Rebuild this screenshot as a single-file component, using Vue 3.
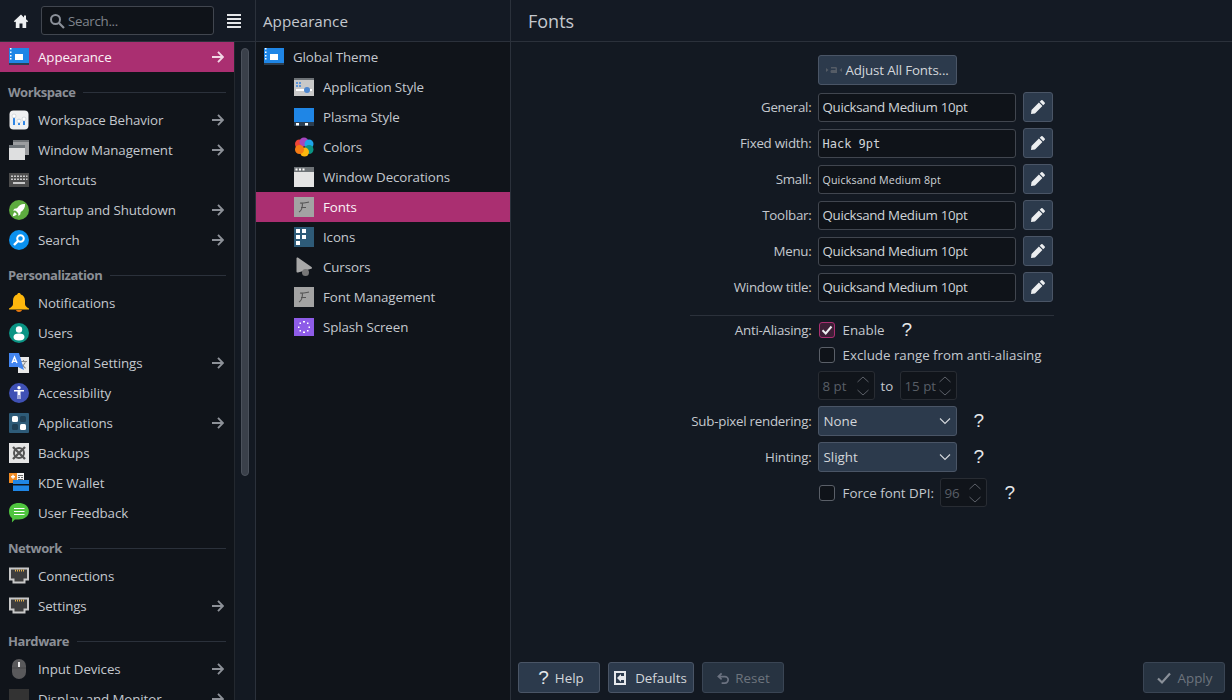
<script setup>
const icons = {
  appearance: '<rect y="1" width="20" height="17" fill="#1f86e6"/><rect y="16" width="20" height="2" fill="#2c3e50"/><path fill="#fff" d="M1 1h1.500v1.500H1zM1 4.500h1.500V6H1zM1 8h1.500v1.500H1zM1 11h1.500v1.500H1zM6 7h8v6H6z"/>',
  workspace: '<rect x=".5" y=".5" width="19" height="19" rx="4" fill="#eff0f1"/><path fill="#2f86e6" d="M4 6h2v9H4zM9 9h2v6H9zM14 11h2v4h-2z"/><circle cx="5" cy="6" r="2" fill="#fff" stroke="#b5bcc2" stroke-width=".5"/><circle cx="10" cy="11" r="2" fill="#fff" stroke="#b5bcc2" stroke-width=".5"/><circle cx="15" cy="9" r="2" fill="#fff" stroke="#b5bcc2" stroke-width=".5"/>',
  windows: '<rect x="4" width="16" height="15" fill="#9b9da0"/><rect x="4" width="16" height="2" fill="#6f7377"/><rect y="5" width="16" height="15" fill="#dedfe0"/><rect y="5" width="16" height="3" fill="#70767b"/>',
  keyboard: '<rect y="3" width="20" height="14" fill="#4d4d4d"/><path fill="#c9c9c9" d="M2 5.500h2v1.500H2zM5 5.500h2v1.500H5zM8 5.500h2v1.500H8zM11 5.500h2v1.500h-2zM14 5.500h2v1.500h-2zM17 5.500h1.500v1.500H17zM2 8.500h2v1.500H2zM5 8.500h2v1.500H5zM8 8.500h2v1.500H8zM11 8.500h2v1.500h-2zM14 8.500h2v1.500h-2zM17 8.500h1.500v1.500H17zM4 12h12v2H4z"/>',
  rocket: '<circle cx="10" cy="10" r="10" fill="#5dab3f"/><path fill="#fff" d="M16 4c-3.500-.3-6 1.200-8 4.300L5.500 8.800 4 10.500l2.800.3 2.400 2.400.3 2.800 1.700-1.500.5-2.500C14.800 10 16.300 7.500 16 4zM5.800 12.200C4.800 12.800 4 14.400 3.800 16.200c1.800-.2 3.400-1 4-2z"/>',
  search: '<circle cx="10" cy="10" r="10" fill="#0a91ef"/><circle cx="11.500" cy="8.500" r="3.300" fill="none" stroke="#fff" stroke-width="2"/><path d="M9 11l-4 4" stroke="#fff" stroke-width="2.400"/>',
  bell: '<path fill="#fdb70d" d="M10 0c1 0 1.700.7 1.800 1.600 2.700.8 4.200 3 4.200 6.400v3c0 1.600 1.300 3 4 4.500v1H0v-1c2.700-1.500 4-2.900 4-4.500V8c0-3.400 1.500-5.600 4.200-6.400C8.300.7 9 0 10 0z"/><path fill="#e8780e" d="M7 17h6c-.3 1.300-1.500 2-3 2s-2.700-.7-3-2z"/>',
  users: '<circle cx="10" cy="10" r="10" fill="#0b9484"/><circle cx="10" cy="6.500" r="3.200" fill="#fff"/><path fill="#fff" d="M4.500 14c0-2.400 2-3.500 5.500-3.500s5.500 1.100 5.500 3.500-2.200 3.500-5.500 3.500-5.500-1.100-5.500-3.500z"/>',
  regional: '<rect x="9" y="4" width="11" height="16" fill="#e9e9e9"/><path fill="#888" d="M11 8h7v1h-7zM14 7h1v2h-1zM12 15l4-6 .8.5-4 6zM13 11l4 4-.8.7-4-4z"/><path fill="#4285f0" d="M0 0h10l5 17-6-3H0z"/><path fill="none" stroke="#fff" stroke-width="1.400" d="M3 10l2.500-6L8 10M3.900 8.200h3.200"/>',
  access: '<circle cx="10" cy="10" r="10" fill="#3f51b5"/><circle cx="10" cy="4.800" r="1.700" fill="#fff"/><path fill="#fff" d="M5 7h10v1.500h-3.500V16h-1v-4h-1v4h-1V8.500H5z"/>',
  apps: '<rect width="20" height="20" rx="1" fill="#2e5b78"/><rect x="3" y="3" width="6" height="6" rx="1.500" fill="#fff"/><rect x="11" y="3" width="6" height="6" rx="1.500" fill="#1f3f55"/><rect x="3" y="11" width="6" height="6" rx="1.500" fill="#1f3f55"/><rect x="11" y="11" width="6" height="6" rx="1.500" fill="#fff"/>',
  backups: '<rect width="20" height="20" fill="#e6e6e6"/><circle cx="10" cy="10" r="5" fill="none" stroke="#555" stroke-width="2"/><path stroke="#555" stroke-width="2.400" d="M4 4l12 12M16 4L4 16"/>',
  wallet: '<rect y="0" width="15" height="10" fill="#f4f4f4"/><rect y="0" width="8" height="10" fill="#f08b24"/><path fill="#fff" d="M2 3h4v1.500H2zM3.300 1.800h1.400v4H3.300z"/><path fill="#666" d="M9 2h5v1H9zM9 4h2v1H9zM12 4h2v1h-2zM9 6h5v1H9z"/><rect x="4" y="7" width="16" height="11" fill="#1f86e6"/><rect x="4" y="11" width="16" height="1.500" fill="#10141a"/>',
  feedback: '<path fill="#4fc43f" d="M10 0c5.500 0 10.500 3 10.500 8.500S15.500 17 10 17H6l-3 3 .3-4.300C1 14.300 0 11.500 0 8.500 0 3 4.500 0 10 0z" transform="scale(.97)"/><path fill="#fff" d="M5 5h10.500v1H5zM5 8h10.500v1H5zM5 11h10.500v1H5z"/>',
  net: '<path fill="#c8c8c8" d="M0 1.500h20v13h-3.500v3h-13v-3H0z"/><path fill="#3d3d3d" d="M2 3.500h16v9h-3.500v3h-9v-3H2z"/><path fill="#e8b24c" d="M6 3.500h1v2H6zM8 3.500h1v2H8zM10 3.500h1v2h-1zM12 3.500h1v2h-1zM14 3.500h1v2h-1z"/>',
  mouse: '<rect x="3" width="14" height="20" rx="7" fill="#59595b"/><path d="M3 9h14" stroke="#3d3d3f" stroke-width=".6"/><rect x="9" y="3" width="2" height="5" fill="#eee"/>',
  display: '<rect y="0" width="20" height="16" fill="#333"/>',
  appstyle: '<rect y="1" width="20" height="18" fill="#c8c8c8"/><rect y="1" width="20" height="2" fill="#6e7377"/><path fill="#5c93d6" d="M2 5h2v2H2zM5 5h2v2H5zM2 8h2v2H2zM5 8h2v2H5z"/><rect x="2" y="12" width="16" height="2" fill="#fff"/><circle cx="13" cy="13" r="3" fill="#4d87d0"/>',
  plasma: '<rect y="1" width="20" height="18" fill="#1f86e6"/><rect y="15" width="20" height="4" fill="#2c3e50"/><path fill="#fff" d="M2 16h3v2.500H2zM11 16h3v2.500h-3z"/>',
  colors: '<circle cx="5.500" cy="7" r="4.500" fill="#ee4538"/><circle cx="10" cy="5" r="4.500" fill="#a646c0"/><circle cx="15" cy="7" r="4.500" fill="#1ea5ea"/><circle cx="15" cy="12.500" r="4.500" fill="#0b9484"/><circle cx="10.500" cy="15" r="4.500" fill="#fdb70d"/><circle cx="5.500" cy="12.500" r="4.500" fill="#f57c14"/>',
  deco: '<rect width="20" height="20" fill="#e4e4e4"/><rect width="20" height="5" fill="#6e7377"/><path fill="#fff" d="M1.500 1.500h2v2h-2zM5 1.500h2v2H5zM8.500 1.500h2v2h-2z"/>',
  font: '<rect width="20" height="20" fill="#a3a3a3"/><path fill="none" stroke="#555" stroke-width="1.100" d="M6 6c3 .5 6-.5 9-1M8.500 6C8.500 10 7 14 5 15M7 10.500h5"/>',
  icons: '<rect width="20" height="20" fill="#2e5b78"/><path fill="#fff" d="M2 2h4v4H2zM8 2h4v4H8zM2 8h4v4H2zM8 8h4v4H8zM2 14h4v4H2z"/>',
  cursor: '<path fill="#a8a8a8" d="M2.500 1.500c0-1 1-1.300 1.700-.8L17.500 10c.8.600.6 1.500-.2 1.800L4 15.500c-.8.300-1.500-.2-1.500-1z"/><circle cx="11.500" cy="15.500" r="3.500" fill="#777"/>',
  splash: '<rect y="1" width="20" height="18" fill="#8e5ce8"/><g fill="#fff"><rect x="9" y="4" width="2" height="1.500"/><rect x="13" y="5.500" width="1.500" height="1.500"/><rect x="5.500" y="5.500" width="1.500" height="1.500"/><rect x="14.500" y="9.500" width="1.500" height="1.500"/><rect x="4" y="9.500" width="1.500" height="1.500"/><rect x="13" y="13" width="1.500" height="1.500"/><rect x="5.500" y="13" width="1.500" height="1.500"/><rect x="9" y="14.500" width="2" height="1.500"/></g>'
}

const sidebar = [
  { name: 'Appearance', icon: 'appearance', arrow: true, active: true },
  { cat: 'Workspace' },
  { name: 'Workspace Behavior', icon: 'workspace', arrow: true },
  { name: 'Window Management', icon: 'windows', arrow: true },
  { name: 'Shortcuts', icon: 'keyboard' },
  { name: 'Startup and Shutdown', icon: 'rocket', arrow: true },
  { name: 'Search', icon: 'search', arrow: true },
  { cat: 'Personalization' },
  { name: 'Notifications', icon: 'bell' },
  { name: 'Users', icon: 'users' },
  { name: 'Regional Settings', icon: 'regional', arrow: true },
  { name: 'Accessibility', icon: 'access' },
  { name: 'Applications', icon: 'apps', arrow: true },
  { name: 'Backups', icon: 'backups' },
  { name: 'KDE Wallet', icon: 'wallet' },
  { name: 'User Feedback', icon: 'feedback' },
  { cat: 'Network' },
  { name: 'Connections', icon: 'net' },
  { name: 'Settings', icon: 'net', arrow: true },
  { cat: 'Hardware' },
  { name: 'Input Devices', icon: 'mouse', arrow: true },
  { name: 'Display and Monitor', icon: 'display', arrow: true }
]

const middle = [
  { name: 'Global Theme', icon: 'appearance', top: true },
  { name: 'Application Style', icon: 'appstyle' },
  { name: 'Plasma Style', icon: 'plasma' },
  { name: 'Colors', icon: 'colors' },
  { name: 'Window Decorations', icon: 'deco' },
  { name: 'Fonts', icon: 'font', active: true },
  { name: 'Icons', icon: 'icons' },
  { name: 'Cursors', icon: 'cursor' },
  { name: 'Font Management', icon: 'font' },
  { name: 'Splash Screen', icon: 'splash' }
]

const fonts = [
  { label: 'General:', value: 'Quicksand Medium 10pt' },
  { label: 'Fixed width:', value: 'Hack 9pt', kind: 'mono' },
  { label: 'Small:', value: 'Quicksand Medium 8pt', kind: 'small' },
  { label: 'Toolbar:', value: 'Quicksand Medium 10pt' },
  { label: 'Menu:', value: 'Quicksand Medium 10pt' },
  { label: 'Window title:', value: 'Quicksand Medium 10pt' }
]
</script>

<template>
  <div class="app">
    <aside class="side">
      <div class="bar side-bar">
        <svg class="home" viewBox="0 0 16 16" width="16" height="16"><path fill="#eef0f2" d="M8 1.500 0.800 8.200 2 9.300l.8-.7V15h3.700v-4.500h3V15h3.700V8.600l.8.7 1.200-1.100L13 6.300V2.500h-2v2z"/></svg>
        <div class="search">
          <svg viewBox="0 0 16 16" width="16" height="16"><circle cx="6.500" cy="6.500" r="4.500" fill="none" stroke="#8b9099" stroke-width="2"/><path d="M10 10l5 5" stroke="#8b9099" stroke-width="2.200"/></svg>
          <span>Search...</span>
        </div>
        <svg class="burger" viewBox="0 0 16 16" width="16" height="16"><path fill="#e4e6e9" d="M1 1h14v2H1zM1 5h14v2H1zM1 9h14v2H1zM1 13h14v2H1z"/></svg>
      </div>
      <div class="side-body">
        <div class="side-list">
          <template v-for="it in sidebar" :key="it.name || it.cat">
            <div v-if="it.cat" class="cat"><b>{{ it.cat }}</b><i></i></div>
            <div v-else class="row" :class="{ active: it.active }">
              <svg class="ic" viewBox="0 0 20 20" width="20" height="20" v-html="icons[it.icon]"></svg>
              <span class="grow">{{ it.name }}</span>
              <svg v-if="it.arrow" class="arrow" viewBox="0 0 12 12" width="12" height="12"><path fill="none" stroke="currentColor" stroke-width="1.900" d="M0 6h11M6 .8 11 6l-5 5.200"/></svg>
            </div>
          </template>
        </div>
        <div class="track"><div class="thumb"></div></div>
      </div>
    </aside>

    <section class="mid">
      <div class="bar mid-bar">Appearance</div>
      <div class="mid-list">
        <div v-for="it in middle" :key="it.name" class="row" :class="{ active: it.active, top: it.top }">
          <svg class="ic" viewBox="0 0 20 20" width="20" height="20" v-html="icons[it.icon]"></svg>
          <span>{{ it.name }}</span>
        </div>
      </div>
    </section>

    <main class="main">
      <div class="bar main-bar">Fonts</div>
      <div class="content">
        <div class="form">
          <span></span>
          <div class="btn adjust">
            <svg viewBox="0 0 16 16" width="16" height="16"><path fill="#555c66" d="M0 6l2.500 2L0 10zM16 6l-2.500 2 2.500 2zM5 5h4.500c1 0 1.500.6 1.500 1.500V11H6c-1 0-1.500-.5-1.500-1.500S5 8 6 8h3.500V6.500H5z"/></svg>
            <span>Adjust All Fonts...</span>
          </div>
          <template v-for="f in fonts" :key="f.label">
            <label class="lab">{{ f.label }}</label>
            <div class="field-row">
              <div class="input" :class="f.kind">{{ f.value }}</div>
              <div class="btn pen">
                <svg viewBox="0 0 16 16" width="16" height="16"><path fill="#eceef0" d="M11.200 1.300a1 1 0 0 1 1.400 0l2.100 2.100a1 1 0 0 1 0 1.400l-1.500 1.500-3.500-3.500zM8.900 3.600l3.500 3.500L5 14.500 1 15l.5-4z"/></svg>
              </div>
            </div>
          </template>

          <div class="sep"></div>

          <label class="lab slim">Anti-Aliasing:</label>
          <div class="inline tight">
            <span class="check on"><svg viewBox="0 0 14 14" width="14" height="14"><path fill="none" stroke="#eceef0" stroke-width="2" d="M2.500 7.200 5.700 10.400 11.500 3.500"/></svg></span>
            <span class="chk-text">Enable</span>
            <span class="q q1">?</span>
          </div>

          <span></span>
          <div class="inline tight tight2">
            <span class="check"></span>
            <span class="chk-text">Exclude range from anti-aliasing</span>
          </div>

          <span></span>
          <div class="inline spins">
            <div class="spin w57"><span>8 pt</span><svg viewBox="0 0 14 24" width="14" height="24"><path fill="none" stroke="#5c6068" d="M1.500 8 7 3l5.500 5M1.500 16 7 21l5.500-5"/></svg></div>
            <span class="to">to</span>
            <div class="spin w57"><span>15 pt</span><svg viewBox="0 0 14 24" width="14" height="24"><path fill="none" stroke="#5c6068" d="M1.500 8 7 3l5.500 5M1.500 16 7 21l5.500-5"/></svg></div>
          </div>

          <label class="lab">Sub-pixel rendering:</label>
          <div class="inline">
            <div class="btn combo"><span>None</span><svg viewBox="0 0 12 12" width="12" height="12"><path fill="none" stroke="#d5d8dc" stroke-width="1.100" d="M1 3.500 6 8.500l5-5"/></svg></div>
            <span class="q q2">?</span>
          </div>

          <label class="lab">Hinting:</label>
          <div class="inline">
            <div class="btn combo"><span>Slight</span><svg viewBox="0 0 12 12" width="12" height="12"><path fill="none" stroke="#d5d8dc" stroke-width="1.100" d="M1 3.500 6 8.500l5-5"/></svg></div>
            <span class="q q2">?</span>
          </div>

          <span></span>
          <div class="inline dpi">
            <span class="check"></span>
            <span class="chk-text dpi-text">Force font DPI:</span>
            <div class="spin w47"><span>96</span><svg viewBox="0 0 14 24" width="14" height="24"><path fill="none" stroke="#5c6068" d="M1.500 8 7 3l5.500 5M1.500 16 7 21l5.500-5"/></svg></div>
            <span class="q q3">?</span>
          </div>
        </div>
      </div>
      <div class="foot">
        <div class="btn fbtn help"><span class="qi">?</span><span>Help</span></div>
        <div class="btn fbtn defaults">
          <svg viewBox="0 0 16 16" width="16" height="16"><path fill="#e6e8eb" d="M1 1h12v14H1zm2 2v10h8v-3H8v2L4 8l4-4v2h3V3z"/></svg>
          <span>Defaults</span>
        </div>
        <div class="btn fbtn off reset">
          <svg viewBox="0 0 16 16" width="15" height="15"><path fill="none" stroke="#6b7280" stroke-width="1.800" d="M3 7h6.500a3.500 3.500 0 0 1 0 7H6M6 3.500 2.500 7 6 10"/></svg>
          <span>Reset</span>
        </div>
        <div class="spacer"></div>
        <div class="btn fbtn off apply">
          <svg viewBox="0 0 16 16" width="16" height="16"><path fill="none" stroke="#8a9099" stroke-width="2.200" d="M2 8.500 6 12.500 14 3.500"/></svg>
          <span>Apply</span>
        </div>
      </div>
    </main>
  </div>
</template>

<style>
html, body { margin: 0; background: #131922; overflow: hidden; }
</style>

<style scoped>
.app {
  display: flex;
  width: 1232px;
  height: 700px;
  overflow: hidden;
  background: #131922;
  color: #c4c8ce;
  font-family: "Open Sans", "Noto Sans", sans-serif;
  font-size: 13.333px;
}
.bar {
  height: 41px;
  flex: none;
  box-sizing: content-box;
  background: #141a24;
  border-bottom: 1px solid #2b313b;
  display: flex;
  align-items: center;
}
.side {
  width: 255px;
  flex: none;
  display: flex;
  flex-direction: column;
  border-right: 1px solid #2b313b;
}
.side-bar { padding-left: 13px; box-sizing: border-box; height: 42px; }
.home { flex: none; }
.search {
  margin-left: 12px;
  width: 173px;
  height: 29px;
  box-sizing: border-box;
  border: 1px solid #41464f;
  border-radius: 3px;
  background: #0f1319;
  display: flex;
  align-items: center;
  padding-left: 7px;
  gap: 3px;
  color: #7f848c;
  letter-spacing: -0.3px;
}
.burger { margin-left: 12px; flex: none; }
.side-body { flex: 1; display: flex; min-height: 0; background: #10141a; }
.side-list { width: 234px; flex: none; overflow: hidden; }
.row {
  height: 30px;
  display: flex;
  align-items: center;
  padding-left: 9px;
  white-space: nowrap;
  letter-spacing: -0.1px;
}
.row .ic { flex: none; margin-right: 9px; }
.grow { flex: 1; }
.arrow { color: #8d9198; margin-right: 10px; flex: none; }
.row.active { background: #aa2f71; color: #fbf2f7; }
.row.active .arrow { color: #f2d8e6; }
.cat {
  height: 33px;
  display: flex;
  align-items: center;
  padding: 7px 8px 0 8px;
  box-sizing: border-box;
  color: #8b8f96;
  gap: 8px;
}
.cat b { font-weight: 700; font-size: 13px; letter-spacing: -0.45px; }
.cat i { flex: 1; height: 1px; background: #2b313b; }
.track {
  width: 21px;
  border-left: 1px solid #23282f;
  box-sizing: border-box;
  background: #131922;
  padding: 6px 0 0 6px;
}
.thumb {
  width: 8px;
  height: 428px;
  box-sizing: border-box;
  background: #3a404a;
  border: 1px solid #4c525c;
  border-radius: 4px;
}
.mid {
  width: 254px;
  flex: none;
  display: flex;
  flex-direction: column;
  border-right: 1px solid #2b313b;
}
.mid-bar { padding-left: 7px; font-size: 15.2px; height: 41px; }
.mid-list { flex: 1; background: #10141a; }
.mid .row { padding-left: 38px; }
.mid .row.top { padding-left: 8px; }
.main { flex: 1; display: flex; flex-direction: column; min-width: 0; }
.main-bar { padding-left: 17px; font-size: 18px; }
.content { flex: 1; display: flex; justify-content: center; padding-top: 13px; min-height: 0; }
.form {
  width: 364px;
  display: grid;
  grid-template-columns: 122px 1fr;
  column-gap: 6px;
  row-gap: 6px;
  align-content: start;
}
.btn {
  box-sizing: border-box;
  background: #2c3a4c;
  border: 1px solid #4a5566;
  border-radius: 3px;
  display: flex;
  align-items: center;
  color: #d3d6da;
}
.adjust { width: 139px; height: 30px; padding-left: 7px; gap: 4px; margin-bottom: 1px; letter-spacing: -0.15px; }
.lab {
  text-align: right;
  white-space: nowrap;
  align-self: center;
  justify-self: end;
  letter-spacing: -0.25px;
}
.lab.slim { height: 16px; line-height: 16px; }
.field-row { display: flex; align-items: center; gap: 7px; height: 30px; }
.input {
  width: 198px;
  height: 29px;
  box-sizing: border-box;
  border: 1px solid #41464f;
  border-radius: 3px;
  background: #0f1319;
  display: flex;
  align-items: center;
  padding-left: 4px;
  color: #d0d3d8;
  letter-spacing: -0.33px;
}
.input.mono { font-family: "DejaVu Sans Mono", monospace; font-size: 12px; padding-top: 1px; letter-spacing: 0; }
.input.small { font-size: 10.667px; padding-top: 1px; letter-spacing: 0.15px; }
.pen { width: 30px; height: 30px; justify-content: center; }
.sep {
  grid-column: 1 / -1;
  height: 1px;
  background: #2b313b;
  margin-top: 7px;
}
.inline { display: flex; align-items: center; white-space: nowrap; }
.tight { height: 16px; }
.tight2 { margin-top: 3px; }
.check {
  width: 16px;
  height: 16px;
  box-sizing: border-box;
  border: 1px solid #5a5f68;
  border-radius: 3px;
  background: #0f1319;
  margin-left: 1px;
  flex: none;
  display: flex;
  align-items: center;
  justify-content: center;
}
.check.on { background: #3d1f36; border-color: #aa2f71; }
.chk-text { margin-left: 8px; }
.q { font-family: "Liberation Sans", sans-serif; font-size: 19px; color: #e6e8ea; }
.q1 { margin-left: 17px; }
.q2 { margin-left: 17px; }
.q3 { margin-left: 18px; }
.spins { height: 29px; margin-top: 2px; }
.spin {
  box-sizing: border-box;
  height: 29px;
  border: 1px solid #282c33;
  border-radius: 3px;
  background: #10141a;
  display: flex;
  align-items: center;
  justify-content: space-between;
  padding: 0 4px;
  color: #595e66;
  flex: none;
}
.w57 { width: 57px; }
.w47 { width: 47px; }
.to { margin: 0 6px; width: 13px; text-align: center; }
.combo {
  width: 139px;
  height: 30px;
  justify-content: space-between;
  padding: 0 5px;
}
.dpi-text { width: 89px; }
.dpi .spin { margin-left: 8px; }
.foot {
  height: 38px;
  flex: none;
  display: flex;
  align-items: flex-start;
  padding: 0 7px;
  gap: 8px;
}
.fbtn { height: 31px; justify-content: center; gap: 6px; }
.help { width: 82px; padding-left: 4px; }
.defaults { width: 86px; padding-right: 2px; }
.reset { width: 82px; gap: 4px; }
.apply { width: 82px; }
.off { background: #273341; border-color: #3a4554; color: #6d747d; }
.qi { font-family: "Liberation Sans", sans-serif; font-size: 19px; color: #e6e8ea; }
.spacer { flex: 1; }
</style>
